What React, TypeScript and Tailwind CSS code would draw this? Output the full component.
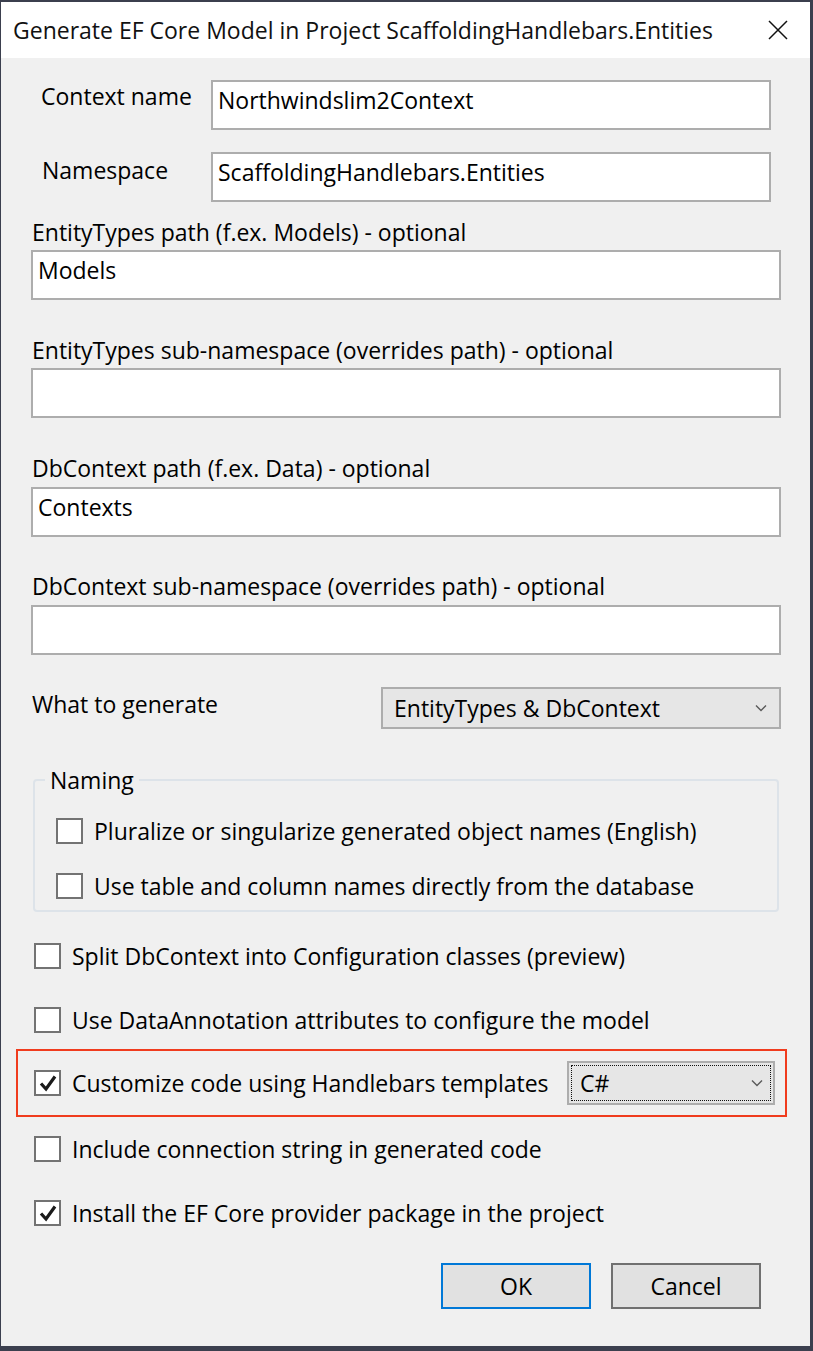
import type { ReactNode } from "react";

const font = { fontFamily: '"Open Sans", "Noto Sans", sans-serif' };

function Chevron() {
  return (
    <svg width="12" height="8" viewBox="0 0 12 8" className="shrink-0">
      <polyline points="1,1.5 6,6.5 11,1.5" fill="none" stroke="#5a5a5a" strokeWidth="1.4" />
    </svg>
  );
}

function CheckBox({ checked }: { checked?: boolean }) {
  return (
    <div className="w-[27px] h-[26px] shrink-0 border-2 border-[#737373] bg-white flex items-center justify-center">
      {checked && (
        <svg width="20" height="20" viewBox="0 0 20 20">
          <polyline points="3,10.5 8,16 17,3.5" fill="none" stroke="#1a1a1a" strokeWidth="3.2" />
        </svg>
      )}
    </div>
  );
}

function CheckRow({ label, checked, className = "" }: { label: string; checked?: boolean; className?: string }) {
  return (
    <div className={`flex items-center h-[30px] gap-[11px] ${className}`}>
      <CheckBox checked={checked} />
      <span className="whitespace-nowrap">{label}</span>
    </div>
  );
}

function TextBox({ value, className = "" }: { value?: string; className?: string }) {
  return (
    <div className={`h-[50px] border-2 border-[#adadad] bg-white px-[5px] pt-[3px] leading-[30px] ${className}`}>
      {value}
    </div>
  );
}

function FieldLabel({ children, className = "" }: { children: ReactNode; className?: string }) {
  return <div className={`h-[30px] leading-[30px] pl-[1px] ${className}`}>{children}</div>;
}

export default function App() {
  return (
    <div
      className="w-[813px] h-[1351px] bg-[#3b3f4e] pt-[2px] pl-[1px] pr-[3px] pb-[5px] flex text-[23px] text-black"
      style={font}
    >
      <div className="flex-1 flex flex-col">
        {/* title bar */}
        <div className="h-[56px] bg-white flex items-center justify-between pl-[12px] pr-[22px] shrink-0">
          <span className="text-[23px] text-[#111]">
            Generate EF Core Model in Project ScaffoldingHandlebars.Entities
          </span>
          <svg width="20" height="20" viewBox="0 0 20 20">
            <path d="M1 1 L19 19 M19 1 L1 19" stroke="#111" strokeWidth="1.5" />
          </svg>
        </div>

        <div className="flex-1 bg-[#f0f0f0] pl-[30px] flex flex-col">
          <div className="flex mt-[22px]">
            <div className="w-[180px] pl-[10px] pt-[1px] leading-[30px]">Context name</div>
            <TextBox value="Northwindslim2Context" className="w-[560px]" />
          </div>
          <div className="flex mt-[22px]">
            <div className="w-[180px] pl-[11px] pt-[3px] leading-[30px]">Namespace</div>
            <TextBox value="ScaffoldingHandlebars.Entities" className="w-[560px]" />
          </div>

          <FieldLabel className="mt-[15px]">EntityTypes path (f.ex. Models) - optional</FieldLabel>
          <TextBox value="Models" className="w-[750px] mt-[3px]" />

          <FieldLabel className="mt-[35px]">EntityTypes sub-namespace (overrides path) - optional</FieldLabel>
          <TextBox className="w-[750px] mt-[3px]" />

          <FieldLabel className="mt-[35px]">DbContext path (f.ex. Data) - optional</FieldLabel>
          <TextBox value="Contexts" className="w-[750px] mt-[4px]" />

          <FieldLabel className="mt-[34px]">DbContext sub-namespace (overrides path) - optional</FieldLabel>
          <TextBox className="w-[750px] mt-[4px]" />

          <div className="flex mt-[32px]">
            <div className="w-[350px] pl-[1px] pt-[2px] leading-[30px]">What to generate</div>
            <div className="w-[400px] h-[42px] border-2 border-[#adadad] bg-[#e6e6e6] flex items-center justify-between pl-[11px] pr-[12px]">
              <span>EntityTypes &amp; DbContext</span>
              <Chevron />
            </div>
          </div>

          <fieldset className="mt-[36px] ml-[2px] w-[746px] h-[147px] border-2 border-[#dde3e9] rounded-[4px] pl-[21px]">
            <legend className="-ml-[11px] px-[5px] leading-[30px]">Naming</legend>
            <CheckRow className="mt-[21px]" label="Pluralize or singularize generated object names (English)" />
            <CheckRow className="mt-[25px]" label="Use table and column names directly from the database" />
          </fieldset>

          <CheckRow className="mt-[29px] ml-[3px]" label="Split DbContext into Configuration classes (preview)" />
          <CheckRow className="mt-[34px] ml-[3px]" label="Use DataAnnotation attributes to configure the model" />

          <div className="mt-[14px] -ml-[15px] w-[771px] h-[68px] border-2 border-[#f03c1e] flex items-center pl-[16px] pr-[10px]">
            <CheckRow checked label="Customize code using Handlebars templates" />
            <div className="ml-auto w-[208px] h-[44px] border-2 border-[#adadad] bg-[#e6e6e6] p-[2px]">
              <div className="h-full border border-dotted border-[#111] flex items-center justify-between pl-[8px] pr-[7px]">
                <span>C#</span>
                <Chevron />
              </div>
            </div>
          </div>

          <CheckRow className="mt-[17px] ml-[3px]" label="Include connection string in generated code" />
          <CheckRow checked className="mt-[34px] ml-[3px]" label="Install the EF Core provider package in the project" />

          <div className="flex mt-[35px] ml-[410px] gap-[20px]">
            <button className="w-[150px] h-[46px] border-2 border-[#0078d7] bg-[#e1e1e1]">OK</button>
            <button className="w-[150px] h-[46px] border-2 border-[#707070] bg-[#e1e1e1]">Cancel</button>
          </div>
        </div>
      </div>
    </div>
  );
}
